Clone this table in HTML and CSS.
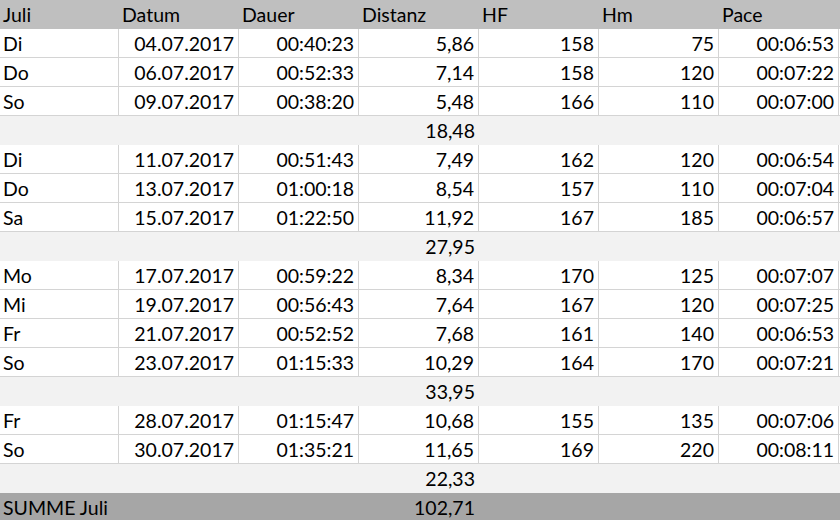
FILE: index.html
```html
<!DOCTYPE html>
<html lang="de">
<head>
<meta charset="utf-8">
<title>Juli</title>
<link rel="stylesheet" href="styles.css">
</head>
<body>
<div class="sheet">
  <div class="row head">
    <div class="c">Juli</div><div class="c">Datum</div><div class="c">Dauer</div><div class="c">Distanz</div><div class="c">HF</div><div class="c">Hm</div><div class="c">Pace</div>
  </div>

  <div class="row data"><div class="c l">Di</div><div class="c">04.07.2017</div><div class="c">00:40:23</div><div class="c">5,86</div><div class="c">158</div><div class="c">75</div><div class="c">00:06:53</div></div>
  <div class="row data"><div class="c l">Do</div><div class="c">06.07.2017</div><div class="c">00:52:33</div><div class="c">7,14</div><div class="c">158</div><div class="c">120</div><div class="c">00:07:22</div></div>
  <div class="row data"><div class="c l">So</div><div class="c">09.07.2017</div><div class="c">00:38:20</div><div class="c">5,48</div><div class="c">166</div><div class="c">110</div><div class="c">00:07:00</div></div>
  <div class="row sub"><div class="c"></div><div class="c"></div><div class="c"></div><div class="c">18,48</div><div class="c"></div><div class="c"></div><div class="c"></div></div>

  <div class="row data"><div class="c l">Di</div><div class="c">11.07.2017</div><div class="c">00:51:43</div><div class="c">7,49</div><div class="c">162</div><div class="c">120</div><div class="c">00:06:54</div></div>
  <div class="row data"><div class="c l">Do</div><div class="c">13.07.2017</div><div class="c">01:00:18</div><div class="c">8,54</div><div class="c">157</div><div class="c">110</div><div class="c">00:07:04</div></div>
  <div class="row data"><div class="c l">Sa</div><div class="c">15.07.2017</div><div class="c">01:22:50</div><div class="c">11,92</div><div class="c">167</div><div class="c">185</div><div class="c">00:06:57</div></div>
  <div class="row sub"><div class="c"></div><div class="c"></div><div class="c"></div><div class="c">27,95</div><div class="c"></div><div class="c"></div><div class="c"></div></div>

  <div class="row data"><div class="c l">Mo</div><div class="c">17.07.2017</div><div class="c">00:59:22</div><div class="c">8,34</div><div class="c">170</div><div class="c">125</div><div class="c">00:07:07</div></div>
  <div class="row data"><div class="c l">Mi</div><div class="c">19.07.2017</div><div class="c">00:56:43</div><div class="c">7,64</div><div class="c">167</div><div class="c">120</div><div class="c">00:07:25</div></div>
  <div class="row data"><div class="c l">Fr</div><div class="c">21.07.2017</div><div class="c">00:52:52</div><div class="c">7,68</div><div class="c">161</div><div class="c">140</div><div class="c">00:06:53</div></div>
  <div class="row data"><div class="c l">So</div><div class="c">23.07.2017</div><div class="c">01:15:33</div><div class="c">10,29</div><div class="c">164</div><div class="c">170</div><div class="c">00:07:21</div></div>
  <div class="row sub"><div class="c"></div><div class="c"></div><div class="c"></div><div class="c">33,95</div><div class="c"></div><div class="c"></div><div class="c"></div></div>

  <div class="row data"><div class="c l">Fr</div><div class="c">28.07.2017</div><div class="c">01:15:47</div><div class="c">10,68</div><div class="c">155</div><div class="c">135</div><div class="c">00:07:06</div></div>
  <div class="row data"><div class="c l">So</div><div class="c">30.07.2017</div><div class="c">01:35:21</div><div class="c">11,65</div><div class="c">169</div><div class="c">220</div><div class="c">00:08:11</div></div>
  <div class="row sub"><div class="c"></div><div class="c"></div><div class="c"></div><div class="c">22,33</div><div class="c"></div><div class="c"></div><div class="c"></div></div>

  <div class="row total"><div class="c l span3">SUMME Juli</div><div class="c">102,71</div><div class="c"></div><div class="c"></div><div class="c"></div></div>
</div>
</body>
</html>
```

FILE: styles.css
```css
html, body {
  margin: 0;
  padding: 0;
  background: #ffffff;
}

body {
  font-family: Lato, "Open Sans", sans-serif;
  font-size: 19.5px;
  color: #000000;
  width: 840px;
  height: 520px;
  overflow: hidden;
}

.sheet {
  display: flex;
  flex-direction: column;
}

.row {
  display: grid;
  grid-template-columns: 119px repeat(6, 120px) 1px;
  height: 29px;
  box-sizing: border-box;
}

.c {
  display: flex;
  align-items: center;
  justify-content: flex-end;
  padding: 0 4px 0 3px;
  box-sizing: border-box;
  white-space: nowrap;
  overflow: hidden;
}

.c.l {
  justify-content: flex-start;
}

.head {
  background: #bfbfbf;
}

.head .c {
  justify-content: flex-start;
}

.data {
  border-bottom: 1px solid #d4d4d4;
}

.data .c {
  border-right: 1px solid #d4d4d4;
}

.sub {
  background: #f2f2f2;
}

.total {
  background: #a6a6a6;
}

.span3 {
  grid-column: span 3;
}
```
